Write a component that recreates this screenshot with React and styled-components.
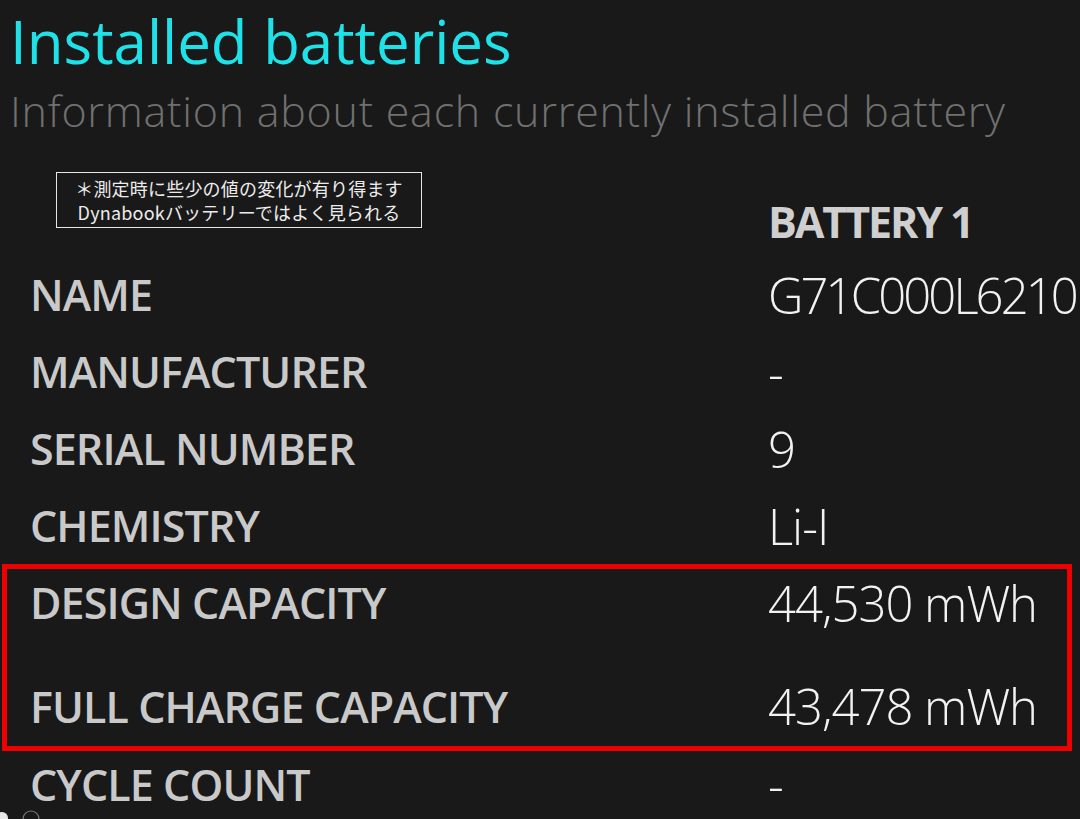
import React from 'react'
import styled, { createGlobalStyle } from 'styled-components'

const GlobalStyle = createGlobalStyle`
  html, body {
    margin: 0;
    padding: 0;
    background: #191919;
  }
  body {
    font-family: "Open Sans", "Noto Sans", sans-serif;
    overflow: hidden;
  }
`

const Page = styled.div`
  position: relative;
  width: 1080px;
  height: 819px;
  overflow: hidden;
  background: #191919;
`

const Header = styled.header`
  padding: 11px 0 0 10px;
`

const Title = styled.h1`
  margin: 0;
  font-size: 60px;
  line-height: 60px;
  font-weight: 400;
  color: #1fe2e8;
  letter-spacing: 0;
`

const Subtitle = styled.h2`
  margin: 18px 0 0;
  font-size: 43px;
  line-height: 43px;
  font-weight: 300;
  color: #707070;
  letter-spacing: 0.75px;
  white-space: nowrap;
`

const Table = styled.div`
  display: flex;
  flex-direction: column;
  margin-top: 38px;
`

const HeadRow = styled.div`
  display: grid;
  grid-template-columns: 768px 1fr;
  height: 86px;
`

const Note = styled.div`
  align-self: start;
  justify-self: start;
  margin: 2px 0 0 56px;
  width: 364px;
  height: 54px;
  border: 1px solid #e6e6e6;
  display: flex;
  flex-direction: column;
  align-items: center;
  justify-content: center;
  font-family: "Noto Sans CJK JP", "Noto Sans", sans-serif;
  font-size: 18px;
  line-height: 24px;
  letter-spacing: 0.2px;
  color: #ececec;
  white-space: nowrap;
`

const BatteryHead = styled.div`
  align-self: end;
  padding-bottom: 12px;
  font-size: 43px;
  line-height: 44px;
  font-weight: 700;
  color: #cfcfcf;
  letter-spacing: -2.1px;
`

const Row = styled.div`
  display: grid;
  grid-template-columns: ${p => 768 - p.$inset}px 1fr;
  align-items: center;
  height: ${p => p.$height || 77}px;
`

const Label = styled.div`
  padding-left: ${p => 30 - p.$inset}px;
  font-size: 43px;
  font-weight: 600;
  color: #c9c9c9;
  letter-spacing: -0.9px;
  white-space: nowrap;
`

const Value = styled.div`
  font-size: 49px;
  font-weight: 300;
  color: #f2f2f2;
  letter-spacing: ${p => (p.$tight ? -2.9 : -1)}px;
  white-space: nowrap;
`

const Highlight = styled.div`
  margin: 0 8px 0 2px;
  border: 5px solid #ee0000;
  display: flex;
  flex-direction: column;
  gap: 30px;
`

const Cursor = styled.svg`
  position: absolute;
  left: 0;
  bottom: 0;
`

const rows = [
  ['NAME', 'G71C000L6210', true],
  ['MANUFACTURER', '-'],
  ['SERIAL NUMBER', '9'],
  ['CHEMISTRY', 'Li-I'],
]

const InfoRow = ({ label, value, inset = 0, height, tight }) => (
  <Row $inset={inset} $height={height}>
    <Label $inset={inset}>{label}</Label>
    <Value $tight={tight}>{value}</Value>
  </Row>
)

export default function App() {
  return (
    <Page>
      <GlobalStyle />
      <Header>
        <Title>Installed batteries</Title>
        <Subtitle>Information about each currently installed battery</Subtitle>
      </Header>
      <Table>
        <HeadRow>
          <Note>
            <span>＊測定時に些少の値の変化が有り得ます</span>
            <span>Dynabookバッテリーではよく見られる</span>
          </Note>
          <BatteryHead>BATTERY 1</BatteryHead>
        </HeadRow>
        {rows.map(([l, v, t]) => (
          <InfoRow key={l} label={l} value={v} tight={t} />
        ))}
        <Highlight>
          <InfoRow label="DESIGN CAPACITY" value="44,530 mWh" inset={7} height={67} />
          <InfoRow label="FULL CHARGE CAPACITY" value="43,478 mWh" inset={7} height={80} />
        </Highlight>
        <InfoRow label="CYCLE COUNT" value="-" height={61} />
      </Table>
      <Cursor width="50" height="10" viewBox="0 0 50 10">
        <circle cx="2" cy="9" r="6" fill="#e8e8e8" />
        <circle cx="31" cy="10" r="8" fill="none" stroke="#777" strokeWidth="1.2" />
      </Cursor>
    </Page>
  )
}
